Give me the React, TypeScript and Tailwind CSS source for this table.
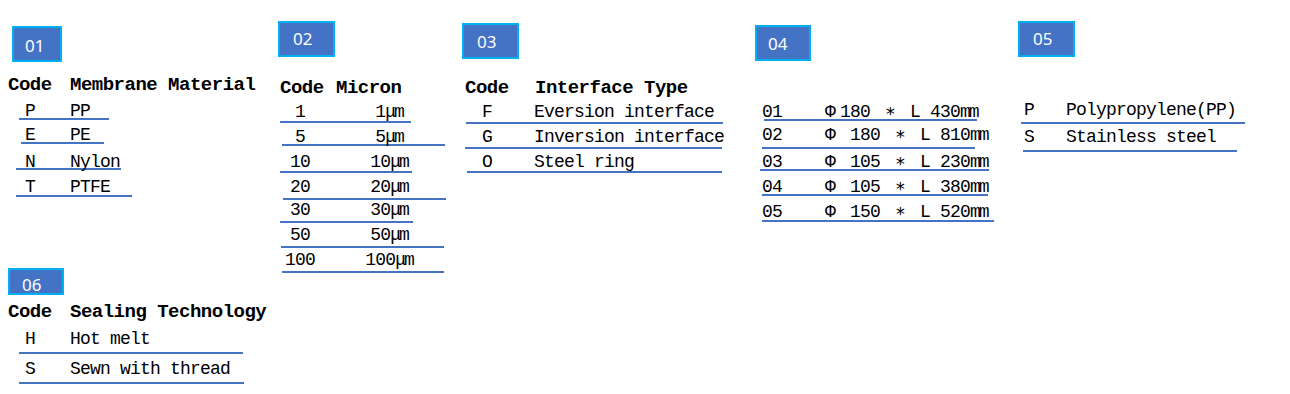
type Row = {
  code: React.ReactNode;
  value: React.ReactNode;
  top: string;
  line: string;
};

type Group = {
  num: string;
  badge: string;
  numPad: string;
  header?: { code: string; label: string; pos: string; codeW: string };
  codeCls: string;
  valueCls?: string;
  rows: Row[];
};

const Phi = ({ tight }: { tight?: boolean }) => (
  <span className={`inline-block text-center ${tight ? "w-[20px]" : "w-[20px] mr-[10px]"}`}>Φ</span>
);
const Star = () => <span className="inline-block w-[20px] text-center">∗</span>;

const size = (phi: boolean, n: string, l: string) => (
  <>
    <Phi tight={!phi} />
    {n} <Star /> L {l}
    <span className="tracking-[-2px]">mm</span>
  </>
);

const micron = (n: string) => (
  <>
    {n}
    <span className="tracking-[-2px]">μm</span>
  </>
);

const col1: Group[] = [
  {
    num: "01",
    badge: "mt-[26px] ml-[12px] w-[50px] h-[36px]",
    numPad: "pt-[9px] pl-[11px]",
    header: { code: "Code", label: "Membrane Material", pos: "mt-[14px] ml-[8px]", codeW: "w-[62px]" },
    codeCls: "ml-[25px] w-[45px]",
    rows: [
      { code: "P", value: "PP", top: "mt-[9px]", line: "-mt-[1px] ml-[19px] w-[90px]" },
      { code: "E", value: "PE", top: "mt-[7px]", line: "-mt-[1px] ml-[21px] w-[83px]" },
      { code: "N", value: "Nylon", top: "mt-[10px]", line: "-mt-[2px] ml-[16px] w-[105px]" },
      { code: "T", value: "PTFE", top: "mt-[9px]", line: "mt-0 ml-[16px] w-[116px]" },
    ],
  },
  {
    num: "06",
    badge: "mt-[71px] ml-[8px] w-[56px] h-[27px]",
    numPad: "pt-[6px] pl-[12px]",
    header: { code: "Code", label: "Sealing Technology", pos: "mt-[8px] ml-[8px]", codeW: "w-[62px]" },
    codeCls: "ml-[25px] w-[45px]",
    rows: [
      { code: "H", value: "Hot melt", top: "mt-[10px]", line: "mt-[5px] ml-[19px] w-[224px]" },
      { code: "S", value: "Sewn with thread", top: "mt-[7px]", line: "mt-[5px] ml-[19px] w-[225px]" },
    ],
  },
];

const col2: Group[] = [
  {
    num: "02",
    badge: "mt-[21px] ml-[8px] w-[57px] h-[36px]",
    numPad: "pt-[7px] pl-[13px]",
    header: { code: "Code", label: "Micron", pos: "mt-[22px] ml-[10px]", codeW: "w-[56px]" },
    codeCls: "ml-[10px] w-[40px] text-center",
    valueCls: "ml-[29px] w-[80px] text-center",
    rows: [
      { code: "1", value: micron("1"), top: "mt-[7px]", line: "mt-[1px] ml-[10px] w-[131px]" },
      { code: "5", value: micron("5"), top: "mt-[6px]", line: "-mt-[1px] ml-[12px] w-[163px]" },
      { code: "10", value: micron("10"), top: "mt-[8px]", line: "mt-[1px] ml-[10px] w-[132px]" },
      { code: "20", value: micron("20"), top: "mt-[6px]", line: "mt-[3px] ml-[13px] w-[163px]" },
      { code: "30", value: micron("30"), top: "mt-[2px]", line: "mt-[3px] ml-[10px] w-[133px]" },
      { code: "50", value: micron("50"), top: "mt-[4px]", line: "mt-[3px] ml-[11px] w-[163px]" },
      { code: "100", value: micron("100"), top: "mt-[4px]", line: "mt-[3px] ml-[12px] w-[162px]" },
    ],
  },
];

const col3: Group[] = [
  {
    num: "03",
    badge: "mt-[23px] ml-[7px] w-[57px] h-[36px]",
    numPad: "pt-[8px] pl-[13px]",
    header: { code: "Code", label: "Interface Type", pos: "mt-[20px] ml-[10px]", codeW: "w-[70px]" },
    codeCls: "ml-[27px] w-[52px]",
    rows: [
      { code: "F", value: "Eversion interface", top: "mt-[7px]", line: "mt-[2px] ml-[11px] w-[257px]" },
      { code: "G", value: "Inversion interface", top: "mt-[5px]", line: "mt-[2px] ml-[10px] w-[257px]" },
      { code: "O", value: "Steel ring", top: "mt-[5px]", line: "mt-[1px] ml-[12px] w-[255px]" },
    ],
  },
];

const col4: Group[] = [
  {
    num: "04",
    badge: "mt-[25px] ml-[10px] w-[56px] h-[36px]",
    numPad: "pt-[8px] pl-[11px]",
    codeCls: "ml-[17px] w-[58px]",
    rows: [
      { code: "01", value: size(false, "180", "430"), top: "mt-[43px]", line: "-mt-[1px] ml-[19px] w-[213px]" },
      { code: "02", value: size(true, "180", "810"), top: "mt-[6px]", line: "mt-[4px] ml-[17px] w-[213px]" },
      { code: "03", value: size(true, "105", "230"), top: "mt-[5px]", line: "-mt-[1px] ml-[15px] w-[229px]" },
      { code: "04", value: size(true, "105", "380"), top: "mt-[8px]", line: "-mt-[1px] ml-[17px] w-[226px]" },
      { code: "05", value: size(true, "150", "520"), top: "mt-[8px]", line: "mt-0 ml-[17px] w-[232px]" },
    ],
  },
];

const col5: Group[] = [
  {
    num: "05",
    badge: "mt-[21px] ml-[8px] w-[57px] h-[36px]",
    numPad: "pt-[7px] pl-[13px]",
    codeCls: "ml-[14px] w-[42px]",
    rows: [
      { code: "P", value: "Polypropylene(PP)", top: "mt-[45px]", line: "mt-[4px] ml-[11px] w-[224px]" },
      { code: "S", value: "Stainless steel", top: "mt-[5px]", line: "mt-[5px] ml-[13px] w-[214px]" },
    ],
  },
];

function Badge({ num, cls, pad }: { num: string; cls: string; pad: string }) {
  return (
    <div className={`${cls} bg-[#4472C4] border-2 border-[#00B0F0] overflow-hidden`}>
      <div className={`${pad} text-white text-[17px] leading-none font-['Noto_Sans',sans-serif]`}>{num}</div>
    </div>
  );
}

function GroupBlock({ g }: { g: Group }) {
  return (
    <div>
      <Badge num={g.num} cls={g.badge} pad={g.numPad} />
      {g.header && (
        <div className={`${g.header.pos} flex font-bold text-[19px] leading-[18px] tracking-[-0.5px] whitespace-pre`}>
          <span className={g.header.codeW}>{g.header.code}</span>
          <span>{g.header.label}</span>
        </div>
      )}
      {g.rows.map((r, i) => (
        <div key={i}>
          <div className={`${r.top} flex text-[18px] leading-[16px] tracking-[-0.8px] whitespace-pre`}>
            <span className={g.codeCls}>{r.code}</span>
            <span className={g.valueCls}>{r.value}</span>
          </div>
          <div className={`${r.line} h-[2px] bg-[#4472C4]`} />
        </div>
      ))}
    </div>
  );
}

export default function App() {
  const cols = [
    { w: "w-[270px]", groups: col1 },
    { w: "w-[185px]", groups: col2 },
    { w: "w-[290px]", groups: col3 },
    { w: "w-[265px]", groups: col4 },
    { w: "flex-1", groups: col5 },
  ];
  return (
    <div className="w-[1290px] h-[394px] bg-white text-black flex overflow-hidden font-['Liberation_Mono',monospace]">
      {cols.map((c, i) => (
        <div key={i} className={`${c.w} shrink-0`}>
          {c.groups.map((g) => (
            <GroupBlock key={g.num} g={g} />
          ))}
        </div>
      ))}
    </div>
  );
}
